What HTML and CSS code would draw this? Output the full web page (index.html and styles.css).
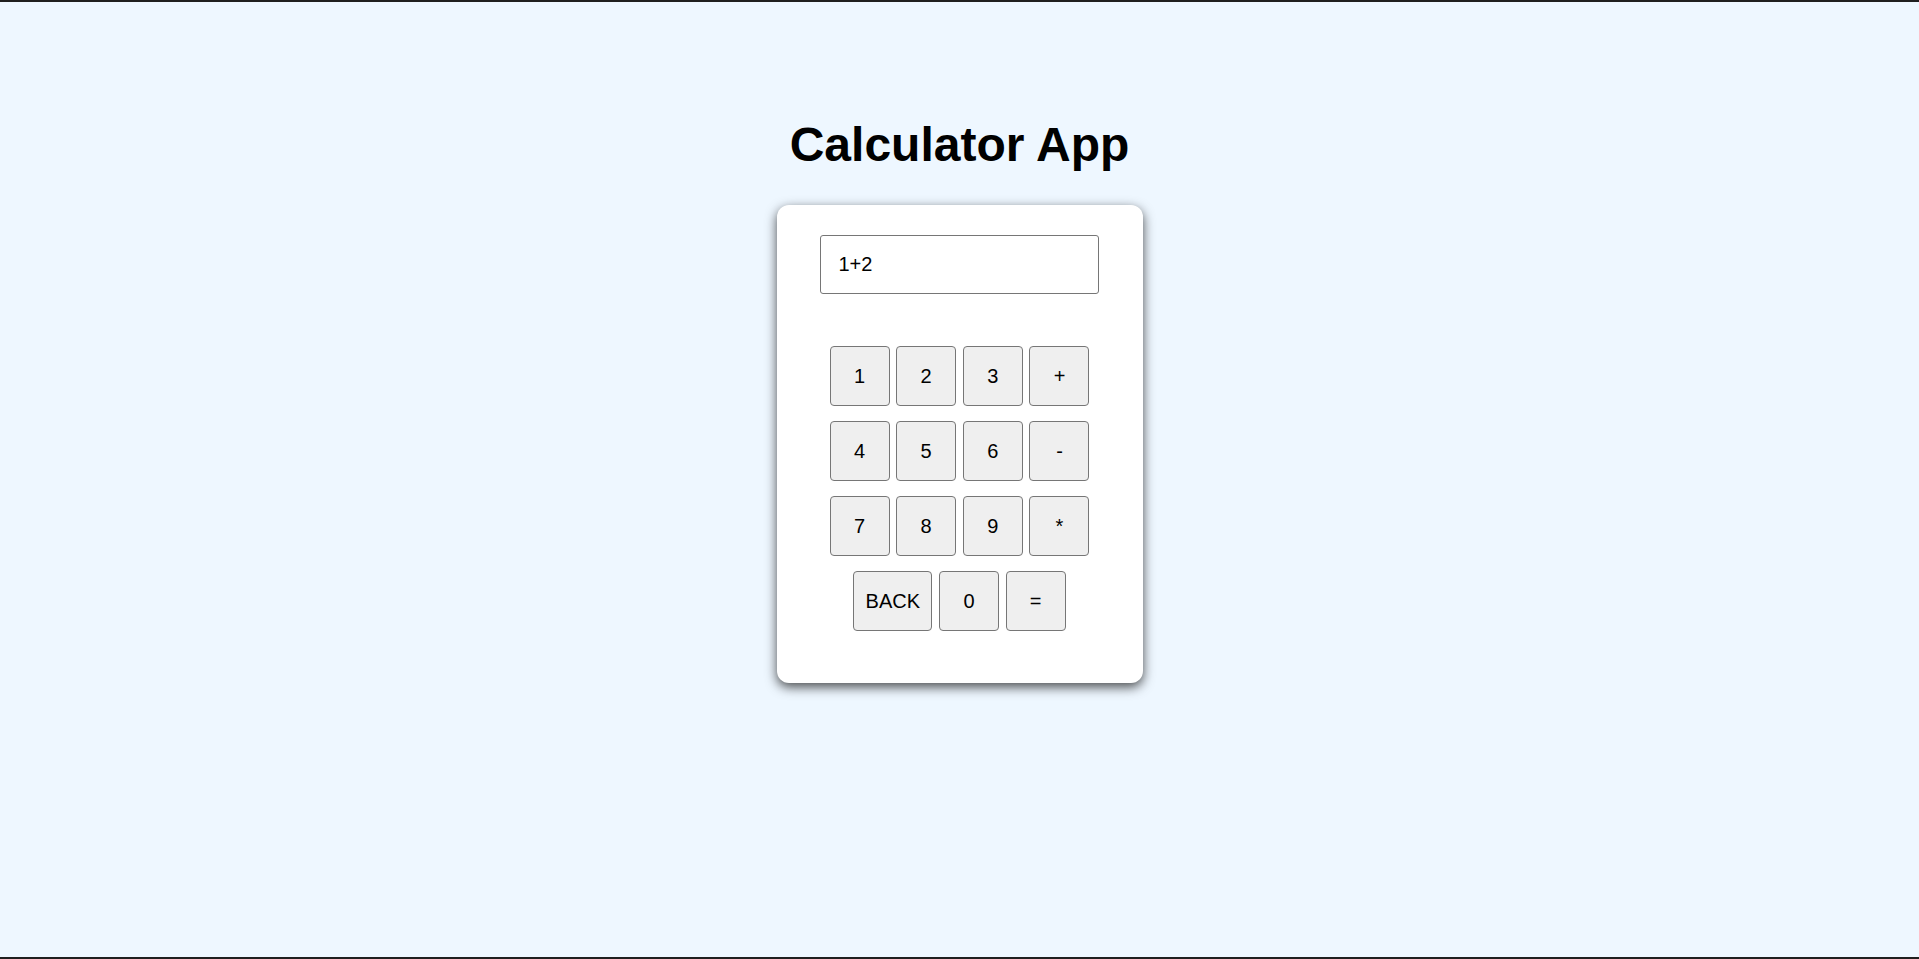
FILE: index.html
```html
<!DOCTYPE html>
<html lang="en">
<head>
<meta charset="utf-8">
<title>Calculator App</title>
<link rel="stylesheet" href="styles.css">
</head>
<body>
<main class="page">
  <h1 class="title">Calculator App</h1>
  <div class="calculator">
    <input class="display" type="text" value="1+2">
    <div class="keys">
      <div class="row">
        <button class="key">1</button>
        <button class="key">2</button>
        <button class="key">3</button>
        <button class="key">+</button>
      </div>
      <div class="row">
        <button class="key">4</button>
        <button class="key">5</button>
        <button class="key">6</button>
        <button class="key">-</button>
      </div>
      <div class="row">
        <button class="key">7</button>
        <button class="key">8</button>
        <button class="key">9</button>
        <button class="key">*</button>
      </div>
      <div class="row">
        <button class="key key-wide">BACK</button>
        <button class="key">0</button>
        <button class="key">=</button>
      </div>
    </div>
  </div>
</main>
</body>
</html>
```

FILE: styles.css
```css
html, body {
  margin: 0;
  padding: 0;
}

body {
  background: #eef7ff;
  font-family: "Liberation Sans", Arial, sans-serif;
  color: #000;
  min-height: 100vh;
  box-sizing: border-box;
  border-top: 2px solid #1f1f1f;
  border-bottom: 2px solid #1f1f1f;
}

.page {
  display: flex;
  flex-direction: column;
  align-items: center;
  padding-top: 115px;
}

.title {
  margin: 0 0 33px;
  font-size: 48px;
  font-weight: bold;
  line-height: 55px;
}

.calculator {
  width: 366px;
  height: 478px;
  box-sizing: border-box;
  background: #fff;
  border-radius: 12px;
  box-shadow: 0 4px 12px rgba(0, 0, 0, 0.7);
  padding: 30px 0 0;
  display: flex;
  flex-direction: column;
  align-items: center;
}

.display {
  width: 279px;
  height: 59px;
  box-sizing: border-box;
  margin: 0 1px 0 0;
  padding: 0 18px;
  border: 1px solid #767676;
  border-radius: 3px;
  font-family: "Liberation Sans", Arial, sans-serif;
  font-size: 20px;
  color: #000;
  background: #fff;
  outline: none;
}

.keys {
  margin-top: 52px;
  display: flex;
  flex-direction: column;
  gap: 15px;
  align-items: center;
}

.row {
  display: flex;
  gap: 6.67px;
  justify-content: center;
}

.key {
  width: 60px;
  height: 60px;
  box-sizing: border-box;
  margin: 0;
  padding: 0;
  background: #efefef;
  border: 1px solid #767676;
  border-radius: 4px;
  font-family: "Liberation Sans", Arial, sans-serif;
  font-size: 20px;
  color: #000;
}

.key-wide {
  width: 79px;
}
```
